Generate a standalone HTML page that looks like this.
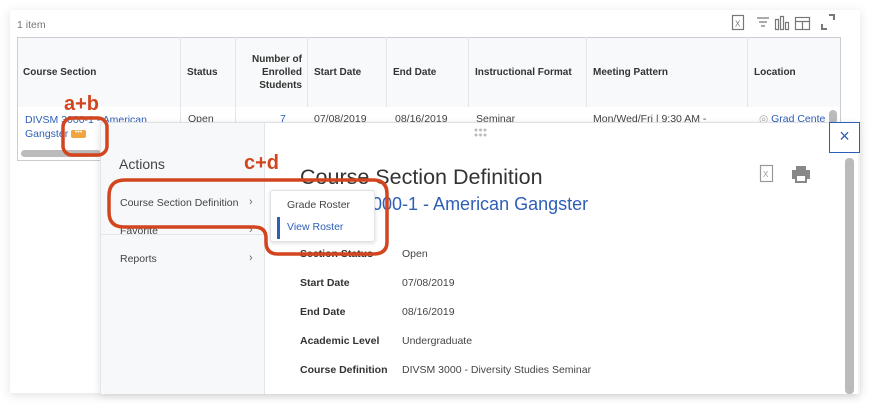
<!DOCTYPE html>
<html><head><meta charset="utf-8"><style>
*{margin:0;padding:0;box-sizing:border-box}
body{width:890px;height:411px;background:#fff;font-family:"Liberation Sans",Arial,sans-serif;position:relative;overflow:hidden;color:#333}
.abs{position:absolute}
.card{left:10px;top:10px;width:850px;height:383px;background:#fff;box-shadow:0 2px 10px rgba(0,0,0,.12)}
.th{position:absolute;top:37px;height:70px;font-size:10px;font-weight:bold;color:#333;display:flex;align-items:center;padding-left:6px;border-left:1px solid #e3e5e8}
.td{position:absolute;top:113px;font-size:10.5px;color:#444}
.lbl{position:absolute;left:300px;font-size:10.5px;font-weight:bold;color:#333}
.val{position:absolute;left:402px;font-size:10.5px;color:#444}
.mi{position:absolute;left:120px;font-size:10.5px;color:#444}
.ch{position:absolute;left:249px;font-size:11px;color:#666}
</style></head><body>
<div class="abs card"></div>
<div class="abs" style="left:17px;top:19px;font-size:10.5px;color:#777">1 item</div>
<svg class="abs" style="left:725px;top:11px" width="115" height="22" viewBox="0 0 115 22">
<g fill="none" stroke="#777" stroke-width="1.2">
<rect x="7.5" y="4.5" width="11" height="14"/>
<path d="M32 7h12M34 11h8M36 15h4"/>
<path d="M50.5 8.5v10h3v-10zM55.5 5.5v13h3v-13zM60.5 11.5v7h3v-7z"/>
<rect x="70.5" y="6.5" width="14" height="12"/><path d="M70.5 10.5h14M77.5 10.5v8"/>
<path d="M97 13v5h5M104 4h5v5" stroke-width="2"/>
</g><text x="10" y="15.5" font-size="8" font-family="Liberation Sans" fill="#777">X</text></svg>
<div class="abs" style="left:17px;top:37px;width:824px;height:124px;border:1px solid #c9ccd0;background:#fff"></div>
<div class="abs" style="left:18px;top:38px;width:822px;height:69px;background:#f8f9fa"></div>
<div class="th" style="left:17px;border-left:none">Course Section</div>
<div class="th" style="left:180px">Status</div>
<div class="th" style="left:235px;width:72px;justify-content:flex-end;padding-right:5px;text-align:right;line-height:13px">Number of<br>Enrolled<br>Students</div>
<div class="th" style="left:307px">Start Date</div>
<div class="th" style="left:386px">End Date</div>
<div class="th" style="left:468px">Instructional Format</div>
<div class="th" style="left:586px">Meeting Pattern</div>
<div class="th" style="left:747px">Location</div>
<div class="abs" style="left:180px;top:107px;width:1px;height:15px;background:#e3e5e8"></div>
<div class="abs" style="left:235px;top:107px;width:1px;height:15px;background:#e3e5e8"></div>
<div class="td" style="left:25px;color:#2d5fb7;line-height:14px">DIVSM 3000-1 - American<br>Gangster <span style="display:inline-block;width:15px;height:8px;background:#f0a540;border-radius:2px;vertical-align:middle;color:#fff;font-size:7px;line-height:5px;text-align:center">•••</span></div>
<div class="td" style="left:188px">Open</div>
<div class="td" style="left:280px;color:#2d5fb7">7</div>
<div class="td" style="left:314px">07/08/2019</div>
<div class="td" style="left:395px">08/16/2019</div>
<div class="td" style="left:476px">Seminar</div>
<div class="td" style="left:593px">Mon/Wed/Fri | 9:30 AM -</div>
<div class="td" style="left:759px;color:#2d5fb7"><span style="color:#aaa">◎</span> Grad Cente</div>
<div class="abs" style="left:829px;top:110px;width:8px;height:14px;background:#bbb;border-radius:4px"></div>
<div class="abs" style="left:21px;top:150px;width:80px;height:7px;background:#bbb;border-radius:4px"></div>
<div class="abs" style="left:100px;top:122px;width:758px;height:272px;background:#fff;border-top:1px solid #dde0e4;box-shadow:0 2px 8px rgba(0,0,0,.12)"></div>
<div class="abs" style="left:100px;top:123px;width:165px;height:271px;background:#f7f8fa;border-right:1px solid #e3e5e8;border-left:1px solid #e3e5e8"></div>
<div class="abs" style="left:101px;top:234px;width:164px;height:1px;background:#e3e5e8"></div>
<div class="abs" style="left:119px;top:156px;font-size:14px;color:#444">Actions</div>
<div class="mi" style="top:197px">Course Section Definition</div><div class="ch" style="top:196px">›</div>
<div class="mi" style="top:225px">Favorite</div><div class="ch" style="top:224px">›</div>
<div class="mi" style="top:253px">Reports</div><div class="ch" style="top:252px">›</div>
<svg class="abs" style="left:473px;top:128px" width="16" height="10"><g fill="#bbb"><circle cx="3" cy="2" r="1.5"/><circle cx="7.5" cy="2" r="1.5"/><circle cx="12" cy="2" r="1.5"/><circle cx="3" cy="7" r="1.5"/><circle cx="7.5" cy="7" r="1.5"/><circle cx="12" cy="7" r="1.5"/></g></svg>
<div class="abs" style="left:829px;top:122px;width:31px;height:31px;border:1.5px solid #2d5fb7;background:#fff;color:#2d5fb7;font-size:18px;text-align:center;line-height:27px">×</div>
<div class="abs" style="left:845px;top:158px;width:9px;height:236px;background:#bbb;border-radius:4px"></div>
<div class="abs" style="left:300px;top:165px;font-size:21.5px;color:#333">Course Section Definition</div>
<div class="abs" style="left:300px;top:194px;font-size:18px;color:#2d5fb7">DIVSM 3000-1 - American Gangster</div>
<svg class="abs" style="left:757px;top:162px" width="60" height="24"><rect x="3.5" y="3.5" width="12" height="16" fill="none" stroke="#999" stroke-width="1.2"/><text x="6" y="15" font-size="8" font-family="Liberation Sans" fill="#999">X</text>
<path d="M39 4h10v4h-10zM35 8h18v9h-3v4h-12v-4h-3z" fill="#888"/><rect x="40" y="14" width="8" height="5" fill="#fff"/></svg>
<div class="lbl" style="top:248px">Section Status</div><div class="val" style="top:248px">Open</div>
<div class="lbl" style="top:277px">Start Date</div><div class="val" style="top:277px">07/08/2019</div>
<div class="lbl" style="top:306px">End Date</div><div class="val" style="top:306px">08/16/2019</div>
<div class="lbl" style="top:335px">Academic Level</div><div class="val" style="top:335px">Undergraduate</div>
<div class="lbl" style="top:364px">Course Definition</div><div class="val" style="top:364px">DIVSM 3000 - Diversity Studies Seminar</div>
<div class="abs" style="left:270px;top:190px;width:105px;height:52px;background:#fff;border:1px solid #e0e2e5;border-radius:3px;box-shadow:0 1px 4px rgba(0,0,0,.15)"></div>
<div class="abs" style="left:287px;top:199px;font-size:10.5px;color:#444">Grade Roster</div>
<div class="abs" style="left:277px;top:217px;width:3px;height:22px;background:#2d5fb7"></div>
<div class="abs" style="left:287px;top:221px;font-size:10.5px;color:#2d5fb7">View Roster</div>
<svg class="abs" style="left:0;top:0" width="890" height="411">
<g fill="none" stroke="#d2451e" stroke-width="3.5">
<rect x="63" y="118" width="44" height="37" rx="9"/>
<path d="M125 180H373Q387 180 387 194V242Q387 254 373 254H278Q266 254 266 242V238Q266 227 254 227H124Q109 227 109 212V196Q109 180 125 180Z"/>
</g>
<text x="64" y="110" font-size="20" font-weight="bold" font-family="Liberation Sans" fill="#d2451e">a+b</text>
<text x="244" y="169" font-size="20" font-weight="bold" font-family="Liberation Sans" fill="#d2451e">c+d</text>
</svg>
</body></html>
